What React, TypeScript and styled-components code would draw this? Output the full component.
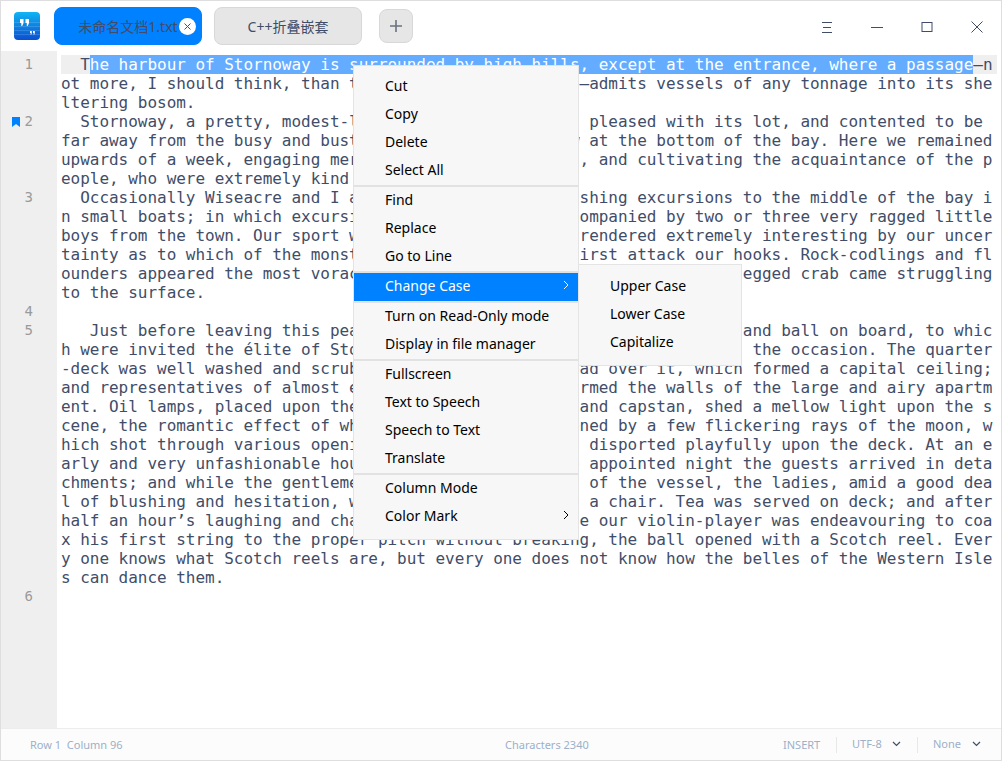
import styled, { createGlobalStyle } from "styled-components";

const LINES = [
  "  The harbour of Stornoway is surrounded by high hills, except at the entrance, where a passage—n",
  "ot more, I should think, than three hundred yards wide—admits vessels of any tonnage into its she",
  "ltering bosom.",
  "  Stornoway, a pretty, modest-looking village, is well pleased with its lot, and contented to be",
  "far away from the busy and bustling world; it sits low at the bottom of the bay. Here we remained",
  "upwards of a week, engaging merrily in boating parties, and cultivating the acquaintance of the p",
  "eople, who were extremely kind to us.",
  "  Occasionally Wiseacre and I arranged to go on far fishing excursions to the middle of the bay i",
  "n small boats; in which excursions we were usually accompanied by two or three very ragged little",
  "boys from the town. Our sport was, on such occasions, rendered extremely interesting by our uncer",
  "tainty as to which of the monsters of the deep would first attack our hooks. Rock-codlings and fl",
  "ounders appeared the most voracious, and now and then a great big red legged crab came struggling",
  "to the surface.",
  "",
  "   Just before leaving this peaceful harbour we held a splendid supper and ball on board, to whic",
  "h were invited the élite of Stornoway, and great care was taken to suit the occasion. The quarter",
  "-deck was well washed and scrubbed, and an awning spread over it, which formed a capital ceiling;",
  "and representatives of almost every kind of bunting formed the walls of the large and airy apartm",
  "ent. Oil lamps, placed upon the binnacle, the compass and capstan, shed a mellow light upon the s",
  "cene, the romantic effect of which was greatly heightened by a few flickering rays of the moon, w",
  "hich shot through various openings in the awnings, and disported playfully upon the deck. At an e",
  "arly and very unfashionable hour on the evening of the appointed night the guests arrived in deta",
  "chments; and while the gentlemen paced the forward end of the vessel, the ladies, amid a good dea",
  "l of blushing and hesitation, were each handed down to a chair. Tea was served on deck; and after",
  "half an hour’s laughing and chatting, and all the while our violin-player was endeavouring to coa",
  "x his first string to the proper pitch without breaking, the ball opened with a Scotch reel. Ever",
  "y one knows what Scotch reels are, but every one does not know how the belles of the Western Isle",
  "s can dance them.",
  "",
];

const GUTTER: Record<number, string> = { 0: "1", 3: "2", 7: "3", 13: "4", 14: "5", 28: "6" };

const MENU_GROUPS = [
  [{ label: "Cut" }, { label: "Copy" }, { label: "Delete" }, { label: "Select All" }],
  [{ label: "Find" }, { label: "Replace" }, { label: "Go to Line" }],
  [{ label: "Change Case", arrow: true, active: true }],
  [{ label: "Turn on Read-Only mode" }, { label: "Display in file manager" }],
  [{ label: "Fullscreen" }, { label: "Text to Speech" }, { label: "Speech to Text" }, { label: "Translate" }],
  [{ label: "Column Mode" }, { label: "Color Mark", arrow: true }],
];

const GlobalStyle = createGlobalStyle`
  html, body {
    margin: 0;
    padding: 0;
    background: #fff;
  }
  * {
    box-sizing: border-box;
  }
`;

export default function App() {
  return (
    <Window>
      <GlobalStyle />
      <TitleBar>
        <Logo viewBox="0 0 26 28">
          <defs>
            <linearGradient id="logoFill" x1="0" y1="0" x2="0" y2="1">
              <stop offset="0" stopColor="#10b4f4" />
              <stop offset="1" stopColor="#0c4fd0" />
            </linearGradient>
          </defs>
          <rect width="26" height="28" rx="4" fill="url(#logoFill)" />
          <path d="M0 10.500h26M0 14.500h26M0 18.500h26M0 22.500h26" stroke="#fff" strokeOpacity=".14" />
          <path d="M6 7h3.500v4l-1.300 3h-.9v-3H6zM11.500 7H15v4l-1.300 3h-.9v-3h-1.300z" fill="#fff" />
          <path d="M16 19h1.800v2l-.7 2h-.4v-2H16zM19 19h1.800v2l-.7 2h-.4v-2H19z" fill="#fff" />
        </Logo>
        <Tab $active>
          未命名文档1.txt
          <CloseDot>
            <svg width="7" height="7" viewBox="0 0 7 7">
              <path d="M.5.500l6 6M6.500.500l-6 6" stroke="#4a5260" strokeWidth="1" fill="none" />
            </svg>
          </CloseDot>
        </Tab>
        <Tab>C++折叠嵌套</Tab>
        <AddButton>
          <svg width="14" height="14" viewBox="0 0 14 14">
            <path d="M7 1v12M1 7h12" stroke="#6a7280" strokeWidth="1.6" fill="none" />
          </svg>
        </AddButton>
        <WindowButtons>
          <WindowButton>
            <svg width="12" height="12" viewBox="0 0 12 12">
              <path d="M1 1.500h10M2 6.500h8M1 11.500h10" stroke="#414d68" fill="none" />
            </svg>
          </WindowButton>
          <WindowButton>
            <svg width="12" height="12" viewBox="0 0 12 12">
              <path d="M0 6.500h12" stroke="#414d68" fill="none" />
            </svg>
          </WindowButton>
          <WindowButton>
            <svg width="12" height="12" viewBox="0 0 12 12">
              <rect x="1" y="1.500" width="10" height="9" stroke="#414d68" fill="none" />
            </svg>
          </WindowButton>
          <WindowButton>
            <svg width="14" height="14" viewBox="0 0 14 14">
              <path d="M1.500 1.500l11 11M12.500 1.500l-11 11" stroke="#414d68" fill="none" />
            </svg>
          </WindowButton>
        </WindowButtons>
      </TitleBar>

      <Body>
        <Gutter>
          {LINES.map((_, i) => (
            <GutterRow key={i}>
              {i === 3 && (
                <BookmarkIcon viewBox="0 0 8 10">
                  <path d="M0 0h8v10L4 7 0 10z" fill="#0081ff" />
                </BookmarkIcon>
              )}
              {GUTTER[i]}
            </GutterRow>
          ))}
        </Gutter>
        <Editor>
          {LINES.map((line, i) =>
            i === 0 ? (
              <CurrentLine key={i}>
                {line.slice(0, 3)}
                <Selection>{line.slice(3, 95)}</Selection>
                {line.slice(95)}
              </CurrentLine>
            ) : (
              <Line key={i}>{line}</Line>
            )
          )}
        </Editor>

        <ContextMenu>
          {MENU_GROUPS.map((group, g) => (
            <MenuGroup key={g}>
              {group.map((item: { label: string; arrow?: boolean; active?: boolean }) => (
                <MenuItem key={item.label} $active={item.active}>
                  {item.label}
                  {item.arrow && (
                    <svg width="6" height="10" viewBox="0 0 6 10">
                      <path d="M1 1l4 4-4 4" stroke="currentColor" fill="none" />
                    </svg>
                  )}
                </MenuItem>
              ))}
            </MenuGroup>
          ))}
        </ContextMenu>
        <SubMenu>
          <MenuItem>Upper Case</MenuItem>
          <MenuItem>Lower Case</MenuItem>
          <MenuItem>Capitalize</MenuItem>
        </SubMenu>
      </Body>

      <StatusBar>
        <RowColumn>Row 1&nbsp;&nbsp;Column 96</RowColumn>
        <CharCount>Characters 2340</CharCount>
        <InsertMode>INSERT</InsertMode>
        <StatusSelect>
          UTF-8
          <Chevron />
        </StatusSelect>
        <StatusSelect>
          None
          <Chevron />
        </StatusSelect>
      </StatusBar>
    </Window>
  );
}

function Chevron() {
  return (
    <svg width="9" height="6" viewBox="0 0 9 6">
      <path d="M1 1l3.500 3.500L8 1" stroke="#414d68" strokeWidth="1.200" fill="none" />
    </svg>
  );
}

const Window = styled.div`
  position: relative;
  width: 1002px;
  height: 761px;
  display: flex;
  flex-direction: column;
  border: 1px solid #dedede;
  background: #fff;
  overflow: hidden;
`;

const TitleBar = styled.div`
  height: 50px;
  flex-shrink: 0;
  display: flex;
  align-items: center;
  padding-left: 13px;
  background: #fff;
`;

const Logo = styled.svg`
  width: 26px;
  height: 28px;
  margin-right: 14px;
`;

const Tab = styled.div<{ $active?: boolean }>`
  position: relative;
  width: 148px;
  height: 38px;
  margin-right: 12px;
  display: flex;
  align-items: center;
  justify-content: center;
  border-radius: 8px;
  border: 1px solid ${p => (p.$active ? "#0081ff" : "#d8d8d8")};
  background: ${p => (p.$active ? "#0081ff" : "#e6e6e6")};
  color: #414d68;
  font-family: "Noto Sans", "Noto Sans CJK SC", sans-serif;
  font-size: 14px;
`;

const CloseDot = styled.span`
  position: absolute;
  right: 5px;
  top: 10px;
  width: 17px;
  height: 17px;
  border-radius: 50%;
  background: #fff;
  display: flex;
  align-items: center;
  justify-content: center;
`;

const AddButton = styled.div`
  width: 34px;
  height: 34px;
  margin-left: 5px;
  display: flex;
  align-items: center;
  justify-content: center;
  border-radius: 8px;
  border: 1px solid #d8d8d8;
  background: #e6e6e6;
`;

const WindowButtons = styled.div`
  margin-left: auto;
  margin-right: -1px;
  display: flex;
`;

const WindowButton = styled.div`
  width: 50px;
  height: 50px;
  padding-top: 2px;
  display: flex;
  align-items: center;
  justify-content: center;
`;

const Body = styled.div`
  position: relative;
  flex: 1;
  min-height: 0;
  display: flex;
  background: #fff;
`;

const Gutter = styled.div`
  width: 56px;
  flex-shrink: 0;
  padding-top: 4px;
  background: #efefef;
`;

const GutterRow = styled.div`
  position: relative;
  height: 19px;
  padding-right: 24px;
  text-align: right;
  color: #9a9a9a;
  font-family: "DejaVu Sans Mono", monospace;
  font-size: 14px;
  line-height: 19px;
`;

const BookmarkIcon = styled.svg`
  position: absolute;
  left: 11px;
  top: 5px;
  width: 8px;
  height: 10px;
`;

const Editor = styled.div`
  flex: 1;
  min-width: 0;
  padding: 4px 4px 0;
  overflow: hidden;
  color: #414d68;
  font-family: "DejaVu Sans Mono", monospace;
  font-size: 16px;
  letter-spacing: -0.03px;
`;

const Line = styled.div`
  height: 19px;
  line-height: 19px;
  white-space: pre;
`;

const CurrentLine = styled(Line)`
  background: #efefef;
`;

const Selection = styled.span`
  display: inline-block;
  background: #64acff;
  color: #fff;
`;

const ContextMenu = styled.div`
  position: absolute;
  left: 352px;
  top: 14px;
  width: 226px;
  padding: 7px 0 8px;
  background: #f7f7f7;
  border: 1px solid #e4e4e4;
  font-family: "Noto Sans", sans-serif;
  font-size: 14px;
`;

const MenuGroup = styled.div`
  & + & {
    border-top: 2px solid #e2e2e2;
  }
`;

const MenuItem = styled.div<{ $active?: boolean }>`
  height: 28px;
  padding: 0 9px 4px 31px;
  display: flex;
  align-items: center;
  justify-content: space-between;
  color: ${p => (p.$active ? "#fff" : "#000")};
  background: ${p => (p.$active ? "#0081ff" : "transparent")};
`;

const SubMenu = styled.div`
  position: absolute;
  left: 577px;
  top: 213px;
  width: 164px;
  padding: 8px 0 8px;
  background: #f7f7f7;
  border: 1px solid #e4e4e4;
  font-family: "Noto Sans", sans-serif;
  font-size: 14px;
`;

const StatusBar = styled.div`
  height: 32px;
  flex-shrink: 0;
  display: flex;
  align-items: center;
  background: #fcfcfc;
  border-top: 1px solid #ececec;
  color: #9db0c8;
  font-family: "Noto Sans", sans-serif;
  font-size: 11px;
`;

const RowColumn = styled.div`
  width: 474px;
  padding-left: 29px;
`;

const CharCount = styled.div`
  width: 308px;
  padding-left: 30px;
`;

const InsertMode = styled.div`
  width: 53px;
`;

const StatusSelect = styled.div`
  width: 81px;
  height: 16px;
  display: flex;
  align-items: center;
  justify-content: space-between;
  padding: 0 16px 2px 15px;
  border-left: 1px solid #e8e8e8;

  &:last-child {
    width: 80px;
  }
`;
